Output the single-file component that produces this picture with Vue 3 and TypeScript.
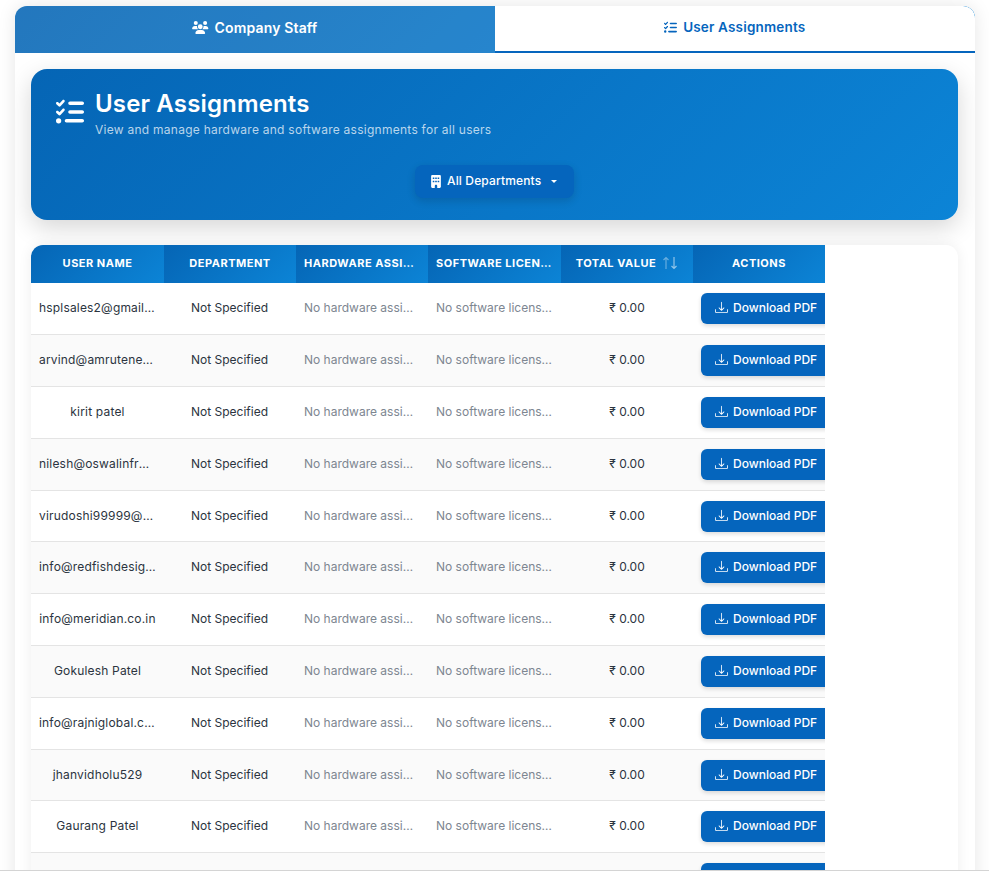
<script setup lang="ts">
interface Row { name: string }
const rows: Row[] = [
  { name: 'hsplsales2@gmail.com' },
  { name: 'arvind@amrutenergy.com' },
  { name: 'kirit patel' },
  { name: 'nilesh@oswalinfra.com' },
  { name: 'virudoshi99999@gmail.com' },
  { name: 'info@redfishdesign.com' },
  { name: 'info@meridian.co.in' },
  { name: 'Gokulesh Patel' },
  { name: 'info@rajniglobal.com' },
  { name: 'jhanvidholu529' },
  { name: 'Gaurang Patel' },
  { name: 'Mahesh Shah' },
]
</script>

<template>
  <div class="page">
    <div class="card">
      <div class="tabs">
        <button class="tab">
          <svg class="ic-users" viewBox="0 0 640 512"><path d="M144 0a80 80 0 1 1 0 160A80 80 0 1 1 144 0zM512 0a80 80 0 1 1 0 160A80 80 0 1 1 512 0zM0 298.7C0 239.8 47.8 192 106.7 192h42.7c15.9 0 31 3.5 44.6 9.7c-1.3 7.2-1.9 14.7-1.9 22.3c0 38.2 16.8 72.5 43.3 96c-.2 0-.4 0-.7 0H21.3C9.6 320 0 310.4 0 298.7zM405.3 320c-.2 0-.4 0-.7 0c26.6-23.5 43.3-57.8 43.3-96c0-7.6-.7-15-1.9-22.3c13.6-6.3 28.7-9.7 44.6-9.7h42.7C592.2 192 640 239.8 640 298.7c0 11.8-9.6 21.3-21.3 21.3H405.3zM224 224a96 96 0 1 1 192 0 96 96 0 1 1 -192 0zM128 485.3C128 411.7 187.7 352 261.3 352H378.7C452.3 352 512 411.7 512 485.3c0 14.7-11.9 26.7-26.7 26.7H154.7c-14.7 0-26.7-11.9-26.7-26.7z" /></svg>
          Company Staff
        </button>
        <button class="tab tab-active">
          <svg class="ic-tasks" viewBox="0 0 512 512"><path d="M152.1 38.2c9.9 8.9 10.7 24 1.8 33.9l-72 80c-4.4 4.9-10.6 7.8-17.2 7.9s-12.9-2.4-17.6-7L7 113C-2.3 103.6-2.3 88.4 7 79s24.6-9.4 33.9 0l22.1 22.1 55.1-61.2c8.9-9.9 24-10.7 33.9-1.8zm0 160c9.9 8.9 10.7 24 1.8 33.9l-72 80c-4.4 4.9-10.6 7.8-17.2 7.9s-12.9-2.4-17.6-7L7 273c-9.4-9.4-9.4-24.6 0-33.9s24.6-9.4 33.9 0l22.1 22.1 55.1-61.2c8.9-9.9 24-10.7 33.9-1.8zM224 96c0-17.7 14.3-32 32-32H480c17.7 0 32 14.3 32 32s-14.3 32-32 32H256c-17.7 0-32-14.3-32-32zm0 160c0-17.7 14.3-32 32-32H480c17.7 0 32 14.3 32 32s-14.3 32-32 32H256c-17.7 0-32-14.3-32-32zM160 416c0-17.7 14.3-32 32-32H480c17.7 0 32 14.3 32 32s-14.3 32-32 32H192c-17.7 0-32-14.3-32-32zM48 368a48 48 0 1 1 0 96 48 48 0 1 1 0-96z" /></svg>
          User Assignments
        </button>
      </div>

      <div class="body">
        <section class="banner">
          <div class="banner-head">
            <svg class="ic-title" viewBox="0 0 512 512"><path d="M152.1 38.2c9.9 8.9 10.7 24 1.8 33.9l-72 80c-4.4 4.9-10.6 7.8-17.2 7.9s-12.9-2.4-17.6-7L7 113C-2.3 103.6-2.3 88.4 7 79s24.6-9.4 33.9 0l22.1 22.1 55.1-61.2c8.9-9.9 24-10.7 33.9-1.8zm0 160c9.9 8.9 10.7 24 1.8 33.9l-72 80c-4.4 4.9-10.6 7.8-17.2 7.9s-12.9-2.4-17.6-7L7 273c-9.4-9.4-9.4-24.6 0-33.9s24.6-9.4 33.9 0l22.1 22.1 55.1-61.2c8.9-9.9 24-10.7 33.9-1.8zM224 96c0-17.7 14.3-32 32-32H480c17.7 0 32 14.3 32 32s-14.3 32-32 32H256c-17.7 0-32-14.3-32-32zm0 160c0-17.7 14.3-32 32-32H480c17.7 0 32 14.3 32 32s-14.3 32-32 32H256c-17.7 0-32-14.3-32-32zM160 416c0-17.7 14.3-32 32-32H480c17.7 0 32 14.3 32 32s-14.3 32-32 32H192c-17.7 0-32-14.3-32-32zM48 368a48 48 0 1 1 0 96 48 48 0 1 1 0-96z" /></svg>
            <div>
              <h1 class="title">User Assignments</h1>
              <p class="subtitle">View and manage hardware and software assignments for all users</p>
            </div>
          </div>
          <div class="filter-row">
            <button class="filter">
              <svg class="ic-building" viewBox="0 0 384 512"><path d="M48 0C21.5 0 0 21.5 0 48V464c0 26.5 21.5 48 48 48h96V432c0-26.5 21.5-48 48-48s48 21.5 48 48v80h96c26.5 0 48-21.5 48-48V48c0-26.5-21.5-48-48-48H48zM64 240c0-8.8 7.2-16 16-16h32c8.8 0 16 7.2 16 16v32c0 8.8-7.2 16-16 16H80c-8.8 0-16-7.2-16-16V240zm112-16h32c8.8 0 16 7.2 16 16v32c0 8.8-7.2 16-16 16H176c-8.8 0-16-7.2-16-16V240c0-8.8 7.2-16 16-16zm80 16c0-8.8 7.2-16 16-16h32c8.8 0 16 7.2 16 16v32c0 8.8-7.2 16-16 16H272c-8.8 0-16-7.2-16-16V240zM80 96h32c8.8 0 16 7.2 16 16v32c0 8.8-7.2 16-16 16H80c-8.8 0-16-7.2-16-16V112c0-8.8 7.2-16 16-16zm80 16c0-8.8 7.2-16 16-16h32c8.8 0 16 7.2 16 16v32c0 8.8-7.2 16-16 16H176c-8.8 0-16-7.2-16-16V112zM272 96h32c8.8 0 16 7.2 16 16v32c0 8.8-7.2 16-16 16H272c-8.8 0-16-7.2-16-16V112c0-8.8 7.2-16 16-16z" /></svg>
              <span class="filter-label">All Departments</span>
              <span class="caret"></span>
            </button>
          </div>
        </section>

        <section class="table-card">
          <table class="table">
            <thead>
              <tr>
                <th>User Name</th>
                <th>Department</th>
                <th>Hardware Assigned</th>
                <th>Software Licenses</th>
                <th>
                  Total Value
                  <svg class="ic-sort" viewBox="0 0 16 14"><path d="M4 13V1.500M1.500 4 4 1.500 6.500 4" /><path class="down" d="M12 1v11.500M9.500 10 12 12.500 14.500 10" /></svg>
                </th>
                <th>Actions</th>
              </tr>
            </thead>
            <tbody>
              <tr v-for="row in rows" :key="row.name">
                <td class="name">{{ row.name }}</td>
                <td class="dept">Not Specified</td>
                <td class="muted left">No hardware assigned</td>
                <td class="muted left">No software licenses</td>
                <td>₹ 0.00</td>
                <td class="action">
                  <button class="pdf">
                    <svg class="ic-dl" viewBox="0 0 16 16"><path d="M.5 9.900a.5.5 0 0 1 .5.5v2.500a1 1 0 0 0 1 1h12a1 1 0 0 0 1-1v-2.500a.5.5 0 0 1 1 0v2.500a2 2 0 0 1-2 2H2a2 2 0 0 1-2-2v-2.500a.5.5 0 0 1 .5-.5z" /><path d="M7.646 11.854a.5.5 0 0 0 .708 0l3-3a.5.5 0 0 0-.708-.708L8.500 10.293V1.500a.5.5 0 0 0-1 0v8.793L5.354 8.146a.5.5 0 1 0-.708.708l3 3z" /></svg>
                    <span class="pdf-label">Download PDF</span>
                  </button>
                </td>
              </tr>
            </tbody>
          </table>
        </section>
      </div>
    </div>
  </div>
</template>

<style>
html, body { margin: 0; overflow: hidden; background: #fff; }
</style>

<style scoped>
.page {
  height: 871px;
  box-sizing: border-box;
  padding: 6px 14px 0 15px;
  border-bottom: 1px solid #d4d4d4;
  overflow: hidden;
  font-family: Inter, "Noto Sans", sans-serif;
}
.card {
  background: #fff;
  border-radius: 12px 12px 0 0;
  box-shadow: 0 0 18px rgba(0, 0, 0, 0.1);
  min-height: 900px;
  overflow: hidden;
}
.tabs {
  display: flex;
  height: 47px;
  background: linear-gradient(135deg, #0565b5, #0c84d6);
}
.tab {
  flex: 1;
  display: flex;
  align-items: center;
  justify-content: center;
  gap: 6px;
  padding: 0 0 5px;
  border: 0;
  background: rgba(255, 255, 255, 0.12);
  color: #fff;
  font: 600 14px Inter, "Noto Sans", sans-serif;
  letter-spacing: 0.15px;
}
.tab-active {
  gap: 5px;
  padding: 0 1px 3px 0;
  background: #fff;
  color: #0565bd;
  border-bottom: 2px solid #0565bd;
  border-top-right-radius: 12px;
  font-size: 13.500px;
  letter-spacing: 0.18px;
}
.ic-users { width: 16.500px; height: 13px; fill: currentColor; }
.ic-tasks { width: 15px; height: 13px; fill: currentColor; }
.body { padding: 16px 17px 0 16px; }
.banner {
  height: 151px;
  box-sizing: border-box;
  padding: 20px 25px 0;
  border-radius: 16px;
  background: linear-gradient(135deg, #0565b5, #0c84d6);
  box-shadow: 0 8px 24px rgba(0, 0, 0, 0.16);
  color: #fff;
}
.banner-head { display: flex; align-items: flex-start; gap: 11px; }
.ic-title { width: 28px; height: 28px; margin-top: 9px; fill: #fff; flex: none; }
.title {
  margin: 0;
  font-size: 24px;
  line-height: 29px;
  font-weight: 600;
  letter-spacing: 0.15px;
}
.subtitle {
  margin: 3px 0 0;
  font-size: 12px;
  line-height: 18px;
  letter-spacing: 0.26px;
  color: rgba(255, 255, 255, 0.72);
}
.filter-row { display: flex; justify-content: center; margin-top: 26px; }
.filter {
  display: flex;
  align-items: center;
  height: 33px;
  width: 159px;
  box-sizing: border-box;
  padding: 0 16px;
  border: 0;
  border-radius: 8px;
  background: #0565bd;
  box-shadow: 0 3px 8px rgba(0, 0, 0, 0.14);
  color: #fff;
  font: 500 12px Inter, "Noto Sans", sans-serif;
  letter-spacing: 0.15px;
}
.filter-label { padding-bottom: 2px; }
.ic-building { width: 10px; height: 13px; margin-right: 6px; fill: #fff; }
.caret {
  width: 0;
  height: 0;
  margin-left: 10px;
  margin-bottom: 1px;
  border-left: 3.500px solid transparent;
  border-right: 3.500px solid transparent;
  border-top: 3.500px solid #fff;
}
.table-card {
  margin-top: 25px;
  min-height: 640px;
  border-radius: 12px;
  background: #fff;
  box-shadow: 0 0 14px rgba(0, 0, 0, 0.07);
  overflow: hidden;
}
.table {
  width: 794px;
  table-layout: fixed;
  border-collapse: collapse;
}
th {
  width: 132px;
  height: 38px;
  box-sizing: border-box;
  padding: 0 8px 2px;
  background: linear-gradient(135deg, #0565b5, #0c84d6);
  color: #fff;
  font-size: 11px;
  font-weight: 700;
  letter-spacing: 0.5px;
  text-transform: uppercase;
  text-align: center;
  white-space: nowrap;
  overflow: hidden;
  text-overflow: ellipsis;
}
th:nth-child(1), th:nth-child(4) { width: 133px; }
.ic-sort {
  width: 16px;
  height: 14px;
  margin-left: 3px;
  vertical-align: -3px;
  fill: none;
  stroke: rgba(255, 255, 255, 0.38);
  stroke-width: 1.200;
}
.ic-sort .down { stroke: rgba(255, 255, 255, 0.55); }
td {
  height: 51.800px;
  box-sizing: border-box;
  padding: 0 8px 2px;
  border-bottom: 1px solid #e4e4e4;
  color: #2b3440;
  font-size: 12px;
  text-align: center;
  white-space: nowrap;
  overflow: hidden;
  text-overflow: ellipsis;
}
tbody tr:nth-child(even) td { background: #fafafa; }
td.name { letter-spacing: 0.18px; }
td.dept { padding-right: 9px; }
td.muted { color: #7d8691; }
td.left { text-align: left; }
td.action { padding-bottom: 0; text-overflow: clip; text-align: left; }
.pdf {
  display: inline-flex;
  align-items: center;
  gap: 5px;
  width: 132px;
  height: 31px;
  box-sizing: border-box;
  padding: 0 14px;
  border: 0;
  border-radius: 6px;
  background: #0565bd;
  box-shadow: 0 2px 4px rgba(0, 0, 0, 0.14);
  color: #fff;
  font: 500 12px Inter, "Noto Sans", sans-serif;
  vertical-align: middle;
}
.pdf-label { padding-bottom: 2px; }
.ic-dl { width: 13px; height: 13px; margin-bottom: 2px; fill: #fff; flex: none; }
</style>
